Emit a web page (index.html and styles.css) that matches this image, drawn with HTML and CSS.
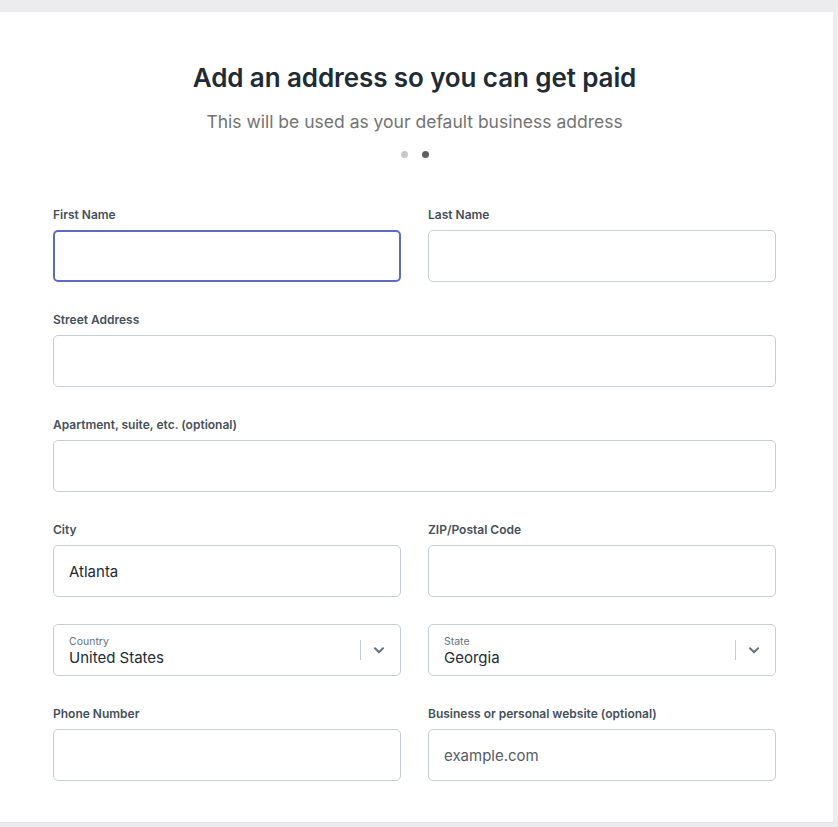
FILE: index.html
```html
<!DOCTYPE html>
<html lang="en">
<head>
    <meta charset="UTF-8">
    <meta name="viewport" content="width=device-width, initial-scale=1.0">
    <title>Add an address</title>
    <link rel="stylesheet" href="styles.css">
</head>
<body>
    <div class="card">
        <div class="header">
            <h1>Add an address so you can get paid</h1>
            <p class="subtitle">This will be used as your default business address</p>
            <div class="dots">
                <span class="dot"></span>
                <span class="dot active"></span>
            </div>
        </div>

        <form class="address-form">
            <div class="field">
                <label for="firstName">First Name</label>
                <input type="text" id="firstName" class="focused">
            </div>
            <div class="field">
                <label for="lastName">Last Name</label>
                <input type="text" id="lastName">
            </div>

            <div class="field full">
                <label for="street">Street Address</label>
                <input type="text" id="street">
            </div>

            <div class="field full">
                <label for="apt">Apartment, suite, etc. (optional)</label>
                <input type="text" id="apt">
            </div>

            <div class="field">
                <label for="city">City</label>
                <input type="text" id="city" value="Atlanta">
            </div>
            <div class="field">
                <label for="zip">ZIP/Postal Code</label>
                <input type="text" id="zip">
            </div>

            <!-- Selects com rótulo flutuante -->
            <div class="select-box">
                <div class="select-text">
                    <span class="select-label">Country</span>
                    <span class="select-value">United States</span>
                </div>
                <span class="select-sep"></span>
                <svg class="chevron" width="10" height="7" viewBox="0 0 10 7"><path d="M1 1.2 5 5.2l4-4" fill="none" stroke="#637381" stroke-width="2" stroke-linecap="round" stroke-linejoin="round"/></svg>
            </div>
            <div class="select-box">
                <div class="select-text">
                    <span class="select-label">State</span>
                    <span class="select-value">Georgia</span>
                </div>
                <span class="select-sep"></span>
                <svg class="chevron" width="10" height="7" viewBox="0 0 10 7"><path d="M1 1.2 5 5.2l4-4" fill="none" stroke="#637381" stroke-width="2" stroke-linecap="round" stroke-linejoin="round"/></svg>
            </div>

            <div class="field">
                <label for="phone">Phone Number</label>
                <input type="text" id="phone">
            </div>
            <div class="field">
                <label for="website">Business or personal website (optional)</label>
                <input type="text" id="website" placeholder="example.com">
            </div>
        </form>
    </div>
</body>
</html>
```

FILE: styles.css
```css
body {
    margin: 0;
    background-color: #ececef; /* fundo cinza da janela */
    font-family: Inter, "Noto Sans", sans-serif;
    color: #212b36;
}

.card {
    background-color: #fff;
    width: 833px;
    height: 811px;
    margin-top: 12px;
    border-bottom: 1px solid #dfe3e8;
    box-sizing: border-box;
    padding: 49px 57px 0 53px;
}

.header {
    text-align: center;
}

h1 {
    margin: 0;
    font-size: 26px;
    line-height: 34px;
    font-weight: 600;
    letter-spacing: -0.1px;
    color: #212b36;
}

.subtitle {
    margin: 15px 0 0;
    font-size: 17.5px;
    line-height: 24px;
    font-weight: 400;
    color: #737373;
}

.dots {
    display: flex;
    justify-content: center;
    gap: 14px;
    margin-top: 17px;
    height: 7px;
}

.dot {
    width: 7px;
    height: 7px;
    border-radius: 50%;
    background-color: #c8c8c8;
}

.dot.active {
    background-color: #5f5f5f;
}

.address-form {
    display: grid;
    grid-template-columns: 348px 348px;
    column-gap: 27px;
    row-gap: 30px;
    margin-top: 49px;
}

.field {
    display: flex;
    flex-direction: column;
}

.field.full {
    grid-column: 1 / 3;
}

label {
    font-size: 12px;
    line-height: 16px;
    font-weight: 600;
    color: #454f5b;
    margin-bottom: 7px;
}

.field input {
    height: 52px;
    box-sizing: border-box;
    border: 1px solid #c4cdd5;
    border-radius: 5px;
    padding: 0 15px;
    font-family: inherit;
    font-size: 15px;
    color: #212b36;
    background-color: #fff;
    outline: none;
}

.field input::placeholder {
    color: #555c66;
}

/* campo com foco */
.field input.focused {
    border: 2px solid #5c6ac4;
    padding: 0 14px;
}

.select-box {
    display: flex;
    align-items: center;
    height: 52px;
    box-sizing: border-box;
    border: 1px solid #c4cdd5;
    border-radius: 5px;
    padding: 0 15px 0 15px;
    margin-top: -3px;
}

.select-text {
    flex: 1;
    display: flex;
    flex-direction: column;
    padding-top: 2px;
}

.select-label {
    font-size: 10.5px;
    line-height: 13px;
    color: #637381;
}

.select-value {
    font-size: 15px;
    line-height: 20px;
    color: #212b36;
}

.select-sep {
    width: 1px;
    height: 20px;
    background-color: #c4cdd5;
    margin-right: 13px;
}

.chevron {
    margin-right: 1px;
}
```
